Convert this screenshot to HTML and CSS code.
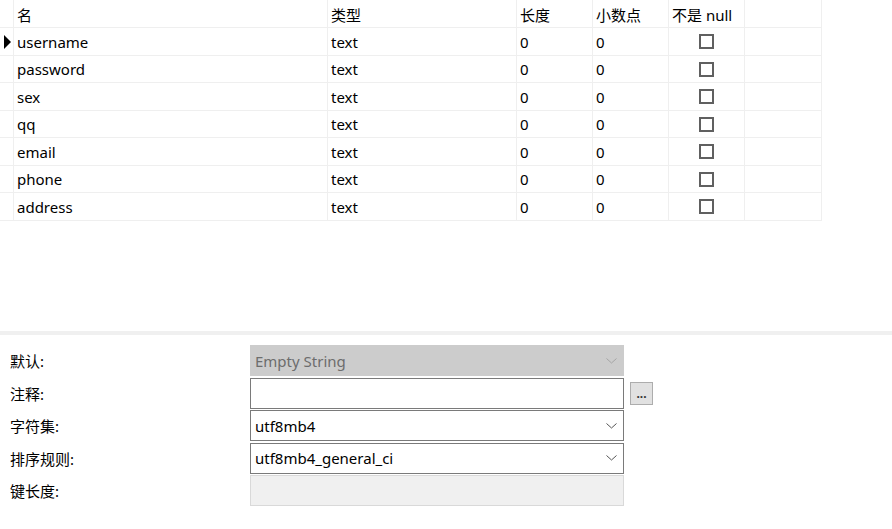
FILE: index.html
```html
<!DOCTYPE html>
<html lang="zh-CN">
<head>
    <meta charset="UTF-8">
    <link rel="stylesheet" href="styles.css">
</head>
<body>
    <div class="fields">
        <div class="grid">
            <div class="cell gutter"></div>
            <div class="cell">名</div>
            <div class="cell">类型</div>
            <div class="cell">长度</div>
            <div class="cell">小数点</div>
            <div class="cell">不是 null</div>
            <div class="cell"></div>

            <div class="cell gutter"><span class="marker"></span></div>
            <div class="cell">username</div>
            <div class="cell">text</div>
            <div class="cell">0</div>
            <div class="cell">0</div>
            <div class="cell check"><span class="box"></span></div>
            <div class="cell"></div>

            <div class="cell gutter"></div>
            <div class="cell">password</div>
            <div class="cell">text</div>
            <div class="cell">0</div>
            <div class="cell">0</div>
            <div class="cell check"><span class="box"></span></div>
            <div class="cell"></div>

            <div class="cell gutter"></div>
            <div class="cell">sex</div>
            <div class="cell">text</div>
            <div class="cell">0</div>
            <div class="cell">0</div>
            <div class="cell check"><span class="box"></span></div>
            <div class="cell"></div>

            <div class="cell gutter"></div>
            <div class="cell">qq</div>
            <div class="cell">text</div>
            <div class="cell">0</div>
            <div class="cell">0</div>
            <div class="cell check"><span class="box"></span></div>
            <div class="cell"></div>

            <div class="cell gutter"></div>
            <div class="cell">email</div>
            <div class="cell">text</div>
            <div class="cell">0</div>
            <div class="cell">0</div>
            <div class="cell check"><span class="box"></span></div>
            <div class="cell"></div>

            <div class="cell gutter"></div>
            <div class="cell">phone</div>
            <div class="cell">text</div>
            <div class="cell">0</div>
            <div class="cell">0</div>
            <div class="cell check"><span class="box"></span></div>
            <div class="cell"></div>

            <div class="cell gutter"></div>
            <div class="cell">address</div>
            <div class="cell">text</div>
            <div class="cell">0</div>
            <div class="cell">0</div>
            <div class="cell check"><span class="box"></span></div>
            <div class="cell"></div>
        </div>
    </div>

    <div class="splitter"></div>

    <div class="props">
        <div class="prop">
            <div class="label">默认:</div>
            <div class="combo disabled">
                <span>Empty String</span>
                <svg class="chevron" width="11" height="6" viewBox="0 0 11 6"><path d="M0.5 0.5 L5.5 5 L10.5 0.5" fill="none" stroke="currentColor" stroke-width="1"/></svg>
            </div>
        </div>
        <div class="prop">
            <div class="label">注释:</div>
            <div class="combo"></div>
            <button class="more-btn">...</button>
        </div>
        <div class="prop">
            <div class="label">字符集:</div>
            <div class="combo">
                <span>utf8mb4</span>
                <svg class="chevron" width="11" height="6" viewBox="0 0 11 6"><path d="M0.5 0.5 L5.5 5 L10.5 0.5" fill="none" stroke="currentColor" stroke-width="1"/></svg>
            </div>
        </div>
        <div class="prop">
            <div class="label">排序规则:</div>
            <div class="combo">
                <span>utf8mb4_general_ci</span>
                <svg class="chevron" width="11" height="6" viewBox="0 0 11 6"><path d="M0.5 0.5 L5.5 5 L10.5 0.5" fill="none" stroke="currentColor" stroke-width="1"/></svg>
            </div>
        </div>
        <div class="prop">
            <div class="label">键长度:</div>
            <div class="combo readonly"></div>
        </div>
    </div>
</body>
</html>
```

FILE: styles.css
```css
* {
    margin: 0;
    padding: 0;
    box-sizing: border-box;
}

body {
    font-family: "Noto Sans", "Noto Sans CJK SC", sans-serif;
    font-size: 15px;
    color: #000;
    background: white;
    width: 892px;
    height: 529px;
    overflow: hidden;
}

.fields {
    height: 331px;
}

.grid {
    display: grid;
    grid-template-columns: 14px 314px 189px 76px 76px 76px 77px;
    grid-template-rows: 28px repeat(7, 27.5px);
    width: 822px;
}

.cell {
    display: flex;
    align-items: center;
    padding-left: 3px;
    padding-top: 1px;
    border-right: 1px solid #efefef;
    border-bottom: 1px solid #efefef;
    white-space: nowrap;
    overflow: hidden;
}

.gutter {
    padding-left: 4px;
}

.marker {
    width: 0;
    height: 0;
    border-top: 7px solid transparent;
    border-bottom: 7px solid transparent;
    border-left: 7px solid #000;
}

.check {
    justify-content: center;
    padding-left: 0;
}

.box {
    width: 15px;
    height: 15px;
    border: 2px solid #606060;
    background: white;
}

.splitter {
    height: 4px;
    background: #f0f0f0;
}

.props {
    padding: 10px 0 0 10px;
    display: flex;
    flex-direction: column;
    gap: 1.5px;
}

.prop {
    display: flex;
    align-items: center;
    height: 31px;
}

.label {
    width: 240px;
}

.combo {
    width: 374px;
    height: 31px;
    display: flex;
    align-items: center;
    justify-content: space-between;
    padding: 0 6px 0 4px;
    border: 1px solid #7a7a7a;
    background: white;
}

.chevron {
    color: #555;
}

.combo.disabled {
    background: #cccccc;
    border-color: #cccccc;
    color: #6d6d6d;
}

.combo.disabled .chevron {
    color: #a5a5a5;
}

.combo.readonly {
    background: #f0f0f0;
    border-color: #d9d9d9;
}

.more-btn {
    width: 23px;
    height: 23px;
    margin-left: 6px;
    background: #e1e1e1;
    border: 1px solid #adadad;
    font-family: "Noto Sans", sans-serif;
    font-size: 12px;
    font-weight: bold;
    color: #333;
    line-height: 1;
    padding-top: 2px;
}
```
